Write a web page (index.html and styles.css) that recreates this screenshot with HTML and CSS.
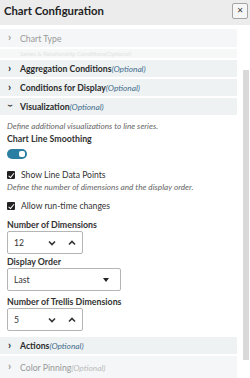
FILE: index.html
```html
<!DOCTYPE html>
<html lang="en">
<head>
    <meta charset="UTF-8">
    <meta name="viewport" content="width=device-width, initial-scale=1.0">
    <title>Chart Configuration</title>
    <link rel="stylesheet" href="styles.css">
</head>
<body>
    <div class="dialog">
        <div class="dialog-header">
            <h1>Chart Configuration</h1>
            <button class="close-button" aria-label="Close">&#x2715;</button>
        </div>

        <div class="dialog-body">
            <div class="panel">
                <div class="section faded">
                    <span class="chevron">&#x203A;</span>
                    <span class="section-title light">Chart Type</span>
                </div>
                <div class="section ghost">
                    <span class="ghost-text">Series &amp; Relationship Conditions(Optional)</span>
                </div>
                <div class="section">
                    <span class="chevron">&#x203A;</span>
                    <span class="section-title">Aggregation Conditions<em>(Optional)</em></span>
                </div>
                <div class="section">
                    <span class="chevron">&#x203A;</span>
                    <span class="section-title">Conditions for Display<em>(Optional)</em></span>
                </div>
                <div class="section open">
                    <span class="chevron down">&#x203A;</span>
                    <span class="section-title">Visualization<em>(Optional)</em></span>
                </div>

                <div class="section-content">
                    <p class="hint">Define additional visualizations to line series.</p>
                    <label class="field-label first">Chart Line Smoothing</label>
                    <div class="toggle on"><span class="knob"></span></div>

                    <div class="check-row">
                        <span class="checkbox"></span>
                        <span>Show Line Data Points</span>
                    </div>
                    <p class="hint second">Define the number of dimensions and the display order.</p>
                    <div class="check-row last">
                        <span class="checkbox"></span>
                        <span>Allow run-time changes</span>
                    </div>

                    <label class="field-label dims">Number of Dimensions</label>
                    <div class="number-input">
                        <span class="value">12</span>
                        <svg class="step" width="8" height="6" viewBox="0 0 8 6"><path d="M1 1.5 L4 4.5 L7 1.5" fill="none" stroke="#333" stroke-width="1.6"/></svg>
                        <svg class="step" width="8" height="6" viewBox="0 0 8 6"><path d="M1 4.5 L4 1.5 L7 4.5" fill="none" stroke="#333" stroke-width="1.6"/></svg>
                    </div>

                    <label class="field-label">Display Order</label>
                    <div class="select">
                        <span class="value">Last</span>
                        <span class="caret"></span>
                    </div>

                    <label class="field-label trellis">Number of Trellis Dimensions</label>
                    <div class="number-input">
                        <span class="value">5</span>
                        <svg class="step" width="8" height="6" viewBox="0 0 8 6"><path d="M1 1.5 L4 4.5 L7 1.5" fill="none" stroke="#333" stroke-width="1.6"/></svg>
                        <svg class="step" width="8" height="6" viewBox="0 0 8 6"><path d="M1 4.5 L4 1.5 L7 4.5" fill="none" stroke="#333" stroke-width="1.6"/></svg>
                    </div>
                </div>

                <div class="section">
                    <span class="chevron">&#x203A;</span>
                    <span class="section-title">Actions<em>(Optional)</em></span>
                </div>
                <div class="section faded bottom">
                    <span class="chevron">&#x203A;</span>
                    <span class="section-title light">Color Pinning<em>(Optional)</em></span>
                </div>
            </div>

            <div class="scrollbar"><div class="thumb"></div></div>
        </div>
    </div>
</body>
</html>
```

FILE: styles.css
```css
body {
    margin: 0;
    font-family: Lato, "Open Sans", Arial, sans-serif;
    background: #fff;
    width: 250px;
    height: 378px;
    overflow: hidden;
}

.dialog {
    width: 250px;
    height: 378px;
    display: flex;
    flex-direction: column;
}

.dialog-header {
    height: 25px;
    background: #ececec;
    display: flex;
    align-items: flex-start;
    justify-content: space-between;
    padding: 3px 2px 0 4px;
    box-sizing: border-box;
    flex-shrink: 0;
}

.dialog-header h1 {
    margin: 0;
    font-size: 11.3px;
    line-height: 15px;
    font-weight: bold;
    color: #222;
}

.close-button {
    width: 16px;
    height: 16px;
    padding: 0;
    border: 1px solid #a5a5a5;
    border-radius: 2px;
    background: #f6f6f6;
    color: #444;
    font-size: 8px;
    line-height: 14px;
    font-family: "DejaVu Sans", sans-serif;
}

.dialog-body {
    flex: 1;
    display: flex;
    padding-top: 4px;
    overflow: hidden;
}

.panel {
    width: 237px;
    flex-shrink: 0;
}

.section {
    height: 17px;
    background: #eef2f3;
    margin-bottom: 2px;
    display: flex;
    align-items: center;
    padding-left: 8px;
    font-size: 8.7px;
    font-weight: bold;
    color: #2b2b2b;
}

.section em {
    font-weight: normal;
    color: #3f6d8c;
    font-size: 8.3px;
}

.chevron {
    display: inline-block;
    width: 12px;
    font-size: 11px;
    font-weight: bold;
    line-height: 10px;
    margin-top: -2px;
}

.chevron.down {
    transform: rotate(90deg);
    margin-top: 0;
    width: 6px;
    margin-right: 6px;
}

.section.faded {
    height: 18px;
    background: #f4f6f7;
    color: #999;
}

.section.faded em {
    color: #bbb;
}

.section-title.light {
    font-weight: normal;
}

.section.ghost {
    height: 9px;
    background: #f6f8f8;
    color: #e2e2e2;
    font-weight: normal;
    font-size: 6px;
    padding-left: 20px;
}

.section.bottom {
    height: 22px;
    margin-bottom: 0;
}

.section-content {
    padding: 4px 7px 6px;
}

.hint {
    margin: 0;
    font-size: 8.2px;
    font-style: italic;
    color: #666;
    line-height: 10px;
}

.hint.second {
    margin-top: 1px;
}

.field-label {
    display: block;
    font-size: 8.8px;
    font-weight: bold;
    color: #333;
    margin-top: 2px;
    line-height: 12px;
}

.field-label.dims {
    margin-top: 7px;
}

.field-label.trellis {
    margin-top: 5px;
}

.toggle {
    width: 20px;
    height: 10px;
    margin-top: 4px;
    border-radius: 5px;
    background: #2a7ea1;
    position: relative;
}

.toggle .knob {
    position: absolute;
    right: 2px;
    top: 2px;
    width: 6px;
    height: 6px;
    border-radius: 2px;
    background: #fff;
}

.check-row {
    display: flex;
    align-items: center;
    gap: 6px;
    height: 12px;
    font-size: 8.6px;
    color: #333;
    margin-top: 10px;
}

.check-row.last {
    margin-top: 8px;
}

.checkbox {
    width: 8px;
    height: 8px;
    background: #222;
    border-radius: 1px;
    position: relative;
}

.checkbox::after {
    content: "";
    position: absolute;
    left: 2.5px;
    top: 0.5px;
    width: 2px;
    height: 4.5px;
    border: solid #fff;
    border-width: 0 1.5px 1.5px 0;
    transform: rotate(40deg);
}

.number-input,
.select {
    box-sizing: border-box;
    height: 23px;
    border: 1px solid #b5b5b5;
    border-radius: 2px;
    display: flex;
    align-items: center;
    padding: 0 6px;
    font-size: 8.6px;
    color: #333;
}

.number-input {
    width: 76px;
    padding-right: 4px;
    gap: 12px;
}

.number-input .value {
    flex: 0 0 22px;
}

.step {
    flex-shrink: 0;
}

.select {
    width: 114px;
    justify-content: space-between;
}

.value {
    flex: 1;
}

.caret {
    width: 0;
    height: 0;
    border-left: 3.5px solid transparent;
    border-right: 3.5px solid transparent;
    border-top: 4px solid #222;
    margin-right: 5px;
}

.scrollbar {
    width: 6px;
    margin-left: 6px;
}

.thumb {
    margin-top: 41px;
    height: 290px;
    background: #d9d9d9;
}
```
